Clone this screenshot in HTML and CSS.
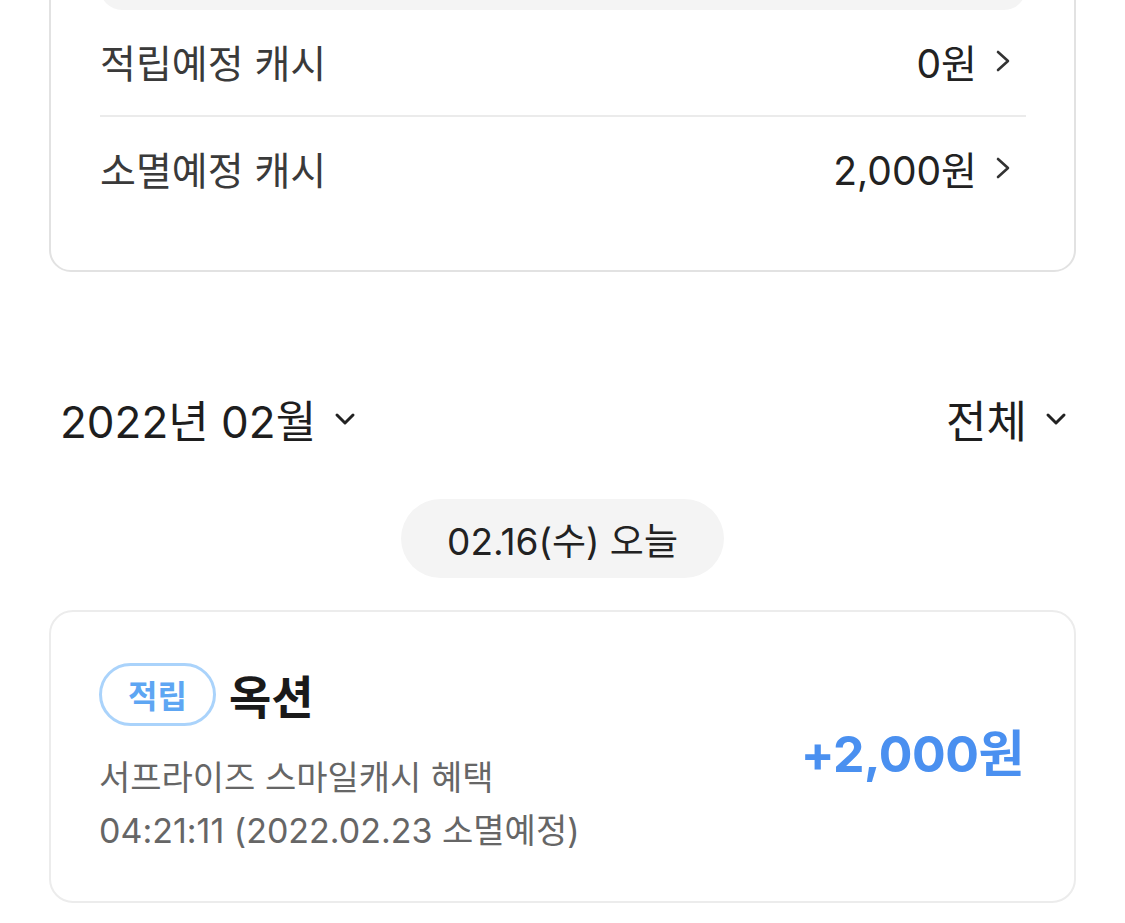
FILE: index.html
```html
<!DOCTYPE html>
<html lang="ko">
<head>
<meta charset="utf-8">
<link rel="stylesheet" href="styles.css">
</head>
<body>
<div class="page">
  <section class="summary">
    <div class="summary-top"></div>
    <div class="row">
      <span class="row-label">적립예정 캐시</span>
      <span class="row-value">0원
        <svg class="chev-right" viewBox="0 0 18 24"><path d="M4 3 L14 12 L4 21" /></svg>
      </span>
    </div>
    <div class="divider"></div>
    <div class="row">
      <span class="row-label">소멸예정 캐시</span>
      <span class="row-value">2,000원
        <svg class="chev-right" viewBox="0 0 18 24"><path d="M4 3 L14 12 L4 21" /></svg>
      </span>
    </div>
  </section>

  <div class="filter">
    <span class="filter-item">2022년 02월
      <svg class="chev-down" viewBox="0 0 24 16"><path d="M4 4 L12 12 L20 4" /></svg>
    </span>
    <span class="filter-item">전체
      <svg class="chev-down" viewBox="0 0 24 16"><path d="M4 4 L12 12 L20 4" /></svg>
    </span>
  </div>

  <div class="date-wrap"><span class="date-pill">02.16(수) 오늘</span></div>

  <section class="tx">
    <div class="tx-info">
      <div class="tx-head">
        <span class="badge">적립</span>
        <span class="tx-title">옥션</span>
      </div>
      <div class="tx-desc">서프라이즈 스마일캐시 혜택</div>
      <div class="tx-desc">04:21:11 (2022.02.23 소멸예정)</div>
    </div>
    <div class="tx-amount">+2,000원</div>
  </section>
</div>
</body>
</html>
```

FILE: styles.css
```css
html, body {
  margin: 0;
  padding: 0;
  background: #ffffff;
}
body {
  font-family: "Inter", "Noto Sans CJK KR", sans-serif;
  color: #222222;
  overflow: hidden;
  width: 1125px;
  height: 923px;
}
.page {
  padding: 0 49px 0 49px;
}
.summary {
  margin-top: -40px;
  border: 2px solid #e2e2e2;
  border-radius: 22px;
  padding: 0 48px 48px 49px;
}
.summary-top {
  height: 48px;
  background: #f4f4f4;
  border-radius: 0 0 22px 22px;
}
.row {
  height: 105px;
  display: flex;
  align-items: center;
  justify-content: space-between;
  font-size: 39px;
}
.row-label {
  color: #3a3a3a;
  margin-top: -4px;
}
.row-value {
  display: flex;
  align-items: center;
  color: #222222;
  gap: 17px;
  padding-right: 14px;
  margin-top: -4px;
}
.chev-right {
  width: 18px;
  height: 24px;
  fill: none;
  stroke: #333333;
  stroke-width: 2.6;
  stroke-linecap: round;
  stroke-linejoin: round;
}
.divider {
  height: 2px;
  background: #ebebeb;
}
.filter {
  margin-top: 117px;
  display: flex;
  justify-content: space-between;
  align-items: center;
  padding: 0 8px 0 11px;
  height: 60px;
}
.filter-item {
  display: flex;
  align-items: center;
  gap: 17px;
  font-size: 44px;
  color: #1e1e1e;
}
.chev-down {
  width: 24px;
  height: 16px;
  fill: none;
  stroke: #222222;
  stroke-width: 3;
  stroke-linecap: round;
  stroke-linejoin: round;
}
.date-wrap {
  display: flex;
  justify-content: center;
  margin-top: 50px;
}
.date-pill {
  background: #f4f4f4;
  border-radius: 40px;
  height: 79px;
  padding: 0 46px;
  display: flex;
  align-items: center;
  font-size: 37px;
  color: #222222;
}
.tx {
  margin-top: 32px;
  border: 2px solid #ececec;
  border-radius: 24px;
  padding: 49px 50px 44px 48px;
  display: flex;
  align-items: center;
  justify-content: space-between;
}
.tx-head {
  display: flex;
  align-items: center;
  gap: 13px;
  margin-bottom: 24px;
}
.badge {
  box-sizing: border-box;
  height: 63px;
  padding: 0 26px;
  border: 3px solid #aad3fb;
  border-radius: 32px;
  display: flex;
  align-items: center;
  font-size: 32px;
  font-weight: 700;
  color: #5ea6f3;
}
.tx-title {
  font-size: 46px;
  font-weight: 700;
  color: #1a1a1a;
}
.tx-desc {
  font-size: 34px;
  color: #666666;
  line-height: 53px;
}
.tx-amount {
  font-size: 50px;
  font-weight: 700;
  color: #4a90f0;
  letter-spacing: -0.5px;
  margin-bottom: 18px;
}
```
